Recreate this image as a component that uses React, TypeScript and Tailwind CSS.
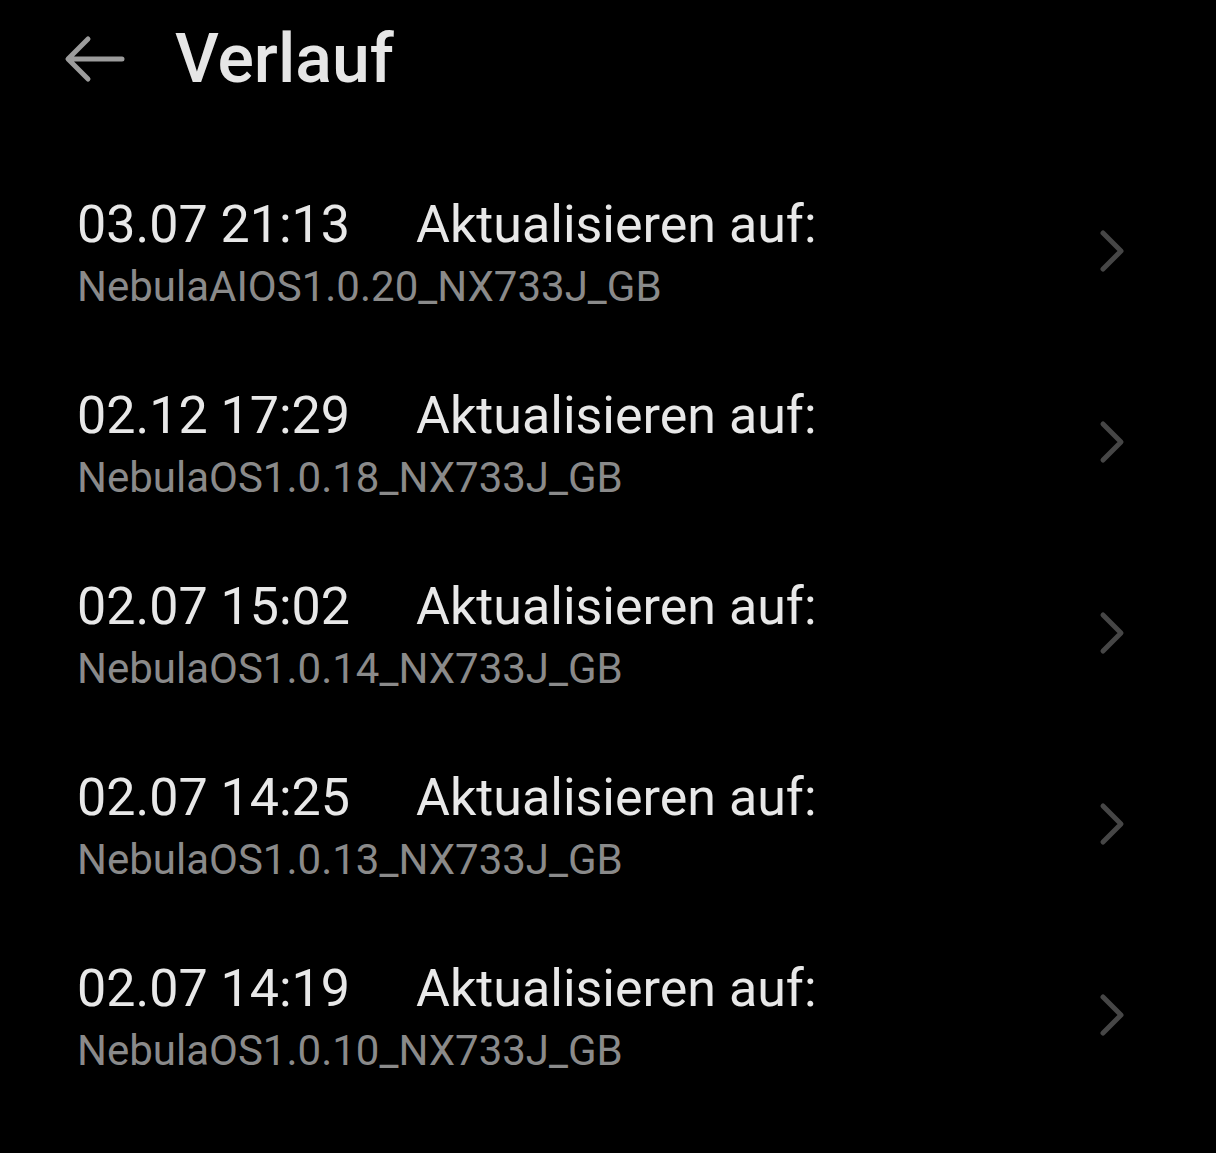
const history = [
  { date: "03.07 21:13", version: "NebulaAIOS1.0.20_NX733J_GB" },
  { date: "02.12 17:29", version: "NebulaOS1.0.18_NX733J_GB" },
  { date: "02.07 15:02", version: "NebulaOS1.0.14_NX733J_GB" },
  { date: "02.07 14:25", version: "NebulaOS1.0.13_NX733J_GB" },
  { date: "02.07 14:19", version: "NebulaOS1.0.10_NX733J_GB" },
];

const BackArrow = () => (
  <svg width="62" height="48" viewBox="0 0 62 48" fill="none" className="text-[#9c9c9c]">
    <path
      d="M58 24H5M24 4L4 24L24 44"
      stroke="currentColor"
      strokeWidth="5"
      strokeLinecap="round"
      strokeLinejoin="round"
    />
  </svg>
);

// chevron on the right of each row
const Chevron = () => (
  <svg width="26" height="44" viewBox="0 0 26 44" fill="none" className="text-[#464646]">
    <path
      d="M4 4L22 22L4 40"
      stroke="currentColor"
      strokeWidth="5"
      strokeLinecap="round"
      strokeLinejoin="round"
    />
  </svg>
);

export default function App() {
  return (
    <div className="min-h-[1153px] w-full bg-black font-['Roboto',sans-serif]">
      {/* header */}
      <div className="flex items-center pt-[19px] pl-[64px]">
        <BackArrow />
        <h1 className="ml-[49px] text-[68px] leading-[80px] font-medium text-[#e6e6e6]">Verlauf</h1>
      </div>

      {/* list */}
      <ul className="mt-[95px] flex flex-col gap-[72px]">
        {history.map((item) => (
          <li key={item.date + item.version} className="flex items-center pl-[77px] pr-[91px]">
            <div className="flex-1">
              <div className="flex gap-[66px] text-[52px] leading-[62px] text-[#e8e8e8]">
                <span>{item.date}</span>
                <span>Aktualisieren auf:</span>
              </div>
              <div className="mt-[5px] text-[42px] leading-[52px] text-[#8a8a8a]">{item.version}</div>
            </div>
            <div className="mb-[6px]">
              <Chevron />
            </div>
          </li>
        ))}
      </ul>
    </div>
  );
}
